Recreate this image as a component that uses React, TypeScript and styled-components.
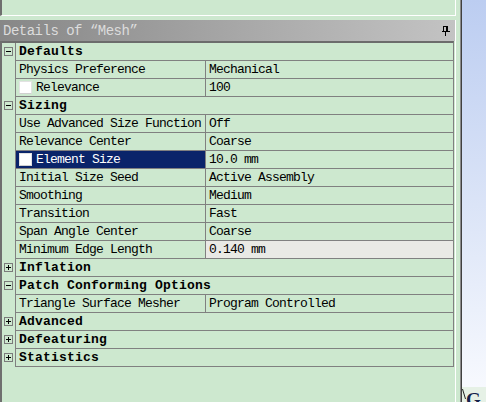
import React from "react";
import styled, { createGlobalStyle } from "styled-components";

const GREEN = "#cde8cf";
const GRID = "#808080";

const Global = createGlobalStyle`
  html, body { margin: 0; padding: 0; background: ${GREEN}; }
  body { font-family: "Liberation Mono", "DejaVu Sans Mono", monospace; }
`;

const Screen = styled.div`
  display: flex;
  width: 486px;
  height: 402px;
  overflow: hidden;
  background: ${GREEN};
`;

const Column = styled.div`
  display: flex;
  flex-direction: column;
  width: 456px;
  flex: none;
`;

const UpperPane = styled.div`
  height: 15px;
  box-sizing: content-box;
  border-left: 2px solid #6f6f6f;
  border-right: 1px solid #ffffff;
  border-bottom: 1px solid #ffffff;
  background: ${GREEN};
  flex: none;
`;

const Gap = styled.div`
  height: 4px;
  flex: none;
`;

const TitleBar = styled.div`
  height: 21px;
  flex: none;
  display: flex;
  align-items: center;
  justify-content: space-between;
  padding: 0 5px 0 3px;
  background: linear-gradient(to right, #878787, #a9a9a9 55%, #c3c3c3);
  border-right: 1px solid #ffffff;
  color: #dcdcdc;
  font-size: 14px;
  letter-spacing: -0.5px;
  white-space: pre;
`;

const Body = styled.div`
  flex: 1;
  border-left: 2px solid #6f6f6f;
  border-right: 1px solid #ffffff;
  padding-right: 1px;
  background: ${GREEN};
`;

const Table = styled.div`
  border-top: 2px solid #6c6c6c;
  border-right: 1px solid ${GRID};
  display: flex;
  flex-direction: column;
`;

const Row = styled.div`
  display: flex;
  height: 18px;
`;

const TreeCell = styled.div`
  width: 13px;
  flex: none;
  border-right: 1px solid ${GRID};
  display: flex;
  align-items: center;
  justify-content: center;
  padding-bottom: 1px;
  box-sizing: content-box;
  height: 17px;
`;

const Toggle = styled.div`
  position: relative;
  width: 7px;
  height: 7px;
  border: 1px solid #7a7a7a;
  &::before {
    content: "";
    position: absolute;
    left: 1px;
    top: 3px;
    width: 5px;
    height: 1px;
    background: #000;
  }
  &[data-open="false"]::after {
    content: "";
    position: absolute;
    left: 3px;
    top: 1px;
    width: 1px;
    height: 5px;
    background: #000;
  }
`;

const Cell = styled.div`
  box-sizing: border-box;
  height: 18px;
  border-bottom: 1px solid ${GRID};
  display: flex;
  align-items: center;
  font-size: 13px;
  letter-spacing: -0.8px;
  color: #000;
  white-space: pre;
  overflow: hidden;
`;

const GroupCell = styled(Cell)`
  flex: 1;
  padding-left: 3px;
  font-weight: bold;
  letter-spacing: 0.2px;
`;

const LabelCell = styled(Cell)<{ $selected?: boolean }>`
  width: 190px;
  flex: none;
  padding-left: 3px;
  border-right: 1px solid ${GRID};
  background: ${(p) => (p.$selected ? "#0a246a" : "transparent")};
  color: ${(p) => (p.$selected ? "#ffffff" : "#000")};
`;

const ValueCell = styled(Cell)<{ $shaded?: boolean }>`
  flex: 1;
  padding-left: 3px;
  background: ${(p) => (p.$shaded ? "#e9e9e5" : "transparent")};
`;

const Check = styled.span`
  width: 11px;
  height: 11px;
  background: #ffffff;
  border: 1px solid #e2e2e2;
  border-bottom-color: #d0d0d0;
  margin-right: 4px;
  flex: none;
`;

const Splitter = styled.div`
  width: 4px;
  flex: none;
`;

const Edge = styled.div`
  width: 1px;
  flex: none;
  background: #8a8a8a;
  border-right: 1px solid #404040;
`;

const Viewport = styled.div`
  flex: 1;
  display: flex;
  flex-direction: column;
`;

const ViewportCanvas = styled.div`
  flex: 1;
  background: linear-gradient(to bottom, #bccdf1, #dfe7f8 60%, #f7f9fe);
`;

const Legend = styled.div`
  height: 15px;
  flex: none;
  display: flex;
  align-items: flex-start;
  background: #e6f1e6;
  overflow: hidden;
`;

const LegendMark = styled.svg`
  width: 4px;
  height: 15px;
  flex: none;
`;

const LegendText = styled.span`
  font-family: "Liberation Serif", serif;
  font-weight: bold;
  font-size: 19px;
  line-height: 19px;
  margin-top: 3px;
  color: #15224a;
`;

type Item =
  | { kind: "group"; label: string; open: boolean }
  | {
      kind: "prop";
      label: string;
      value: string;
      check?: boolean;
      selected?: boolean;
      shaded?: boolean;
    };

const items: Item[] = [
  { kind: "group", label: "Defaults", open: true },
  { kind: "prop", label: "Physics Preference", value: "Mechanical" },
  { kind: "prop", label: "Relevance", value: "100", check: true },
  { kind: "group", label: "Sizing", open: true },
  { kind: "prop", label: "Use Advanced Size Function", value: "Off" },
  { kind: "prop", label: "Relevance Center", value: "Coarse" },
  { kind: "prop", label: "Element Size", value: "10.0 mm", check: true, selected: true },
  { kind: "prop", label: "Initial Size Seed", value: "Active Assembly" },
  { kind: "prop", label: "Smoothing", value: "Medium" },
  { kind: "prop", label: "Transition", value: "Fast" },
  { kind: "prop", label: "Span Angle Center", value: "Coarse" },
  { kind: "prop", label: "Minimum Edge Length", value: "0.140 mm", shaded: true },
  { kind: "group", label: "Inflation", open: false },
  { kind: "group", label: "Patch Conforming Options", open: true },
  { kind: "prop", label: "Triangle Surface Mesher", value: "Program Controlled" },
  { kind: "group", label: "Advanced", open: false },
  { kind: "group", label: "Defeaturing", open: false },
  { kind: "group", label: "Statistics", open: false },
];

const PinIcon = () => (
  <svg width="8" height="10" viewBox="0 0 8 10">
    <rect x="1.5" y="0.5" width="4" height="5" fill="none" stroke="#000" />
    <rect x="4" y="1" width="2" height="4" fill="#000" />
    <rect x="0" y="5" width="8" height="1" fill="#000" />
    <rect x="3" y="6" width="1" height="4" fill="#000" />
  </svg>
);

export default function App() {
  return (
    <>
      <Global />
      <Screen>
        <Column>
          <UpperPane />
          <Gap />
          <TitleBar>
            <span>Details of “Mesh”</span>
            <PinIcon />
          </TitleBar>
          <Body>
            <Table>
              {items.map((it) =>
                it.kind === "group" ? (
                  <Row key={it.label}>
                    <TreeCell>
                      <Toggle data-open={String(it.open)} />
                    </TreeCell>
                    <GroupCell>{it.label}</GroupCell>
                  </Row>
                ) : (
                  <Row key={it.label}>
                    <TreeCell />
                    <LabelCell $selected={it.selected}>
                      {it.check && <Check />}
                      {it.label}
                    </LabelCell>
                    <ValueCell $shaded={it.shaded}>{it.value}</ValueCell>
                  </Row>
                )
              )}
            </Table>
          </Body>
        </Column>
        <Splitter />
        <Edge />
        <Viewport>
          <ViewportCanvas />
          <Legend>
            <LegendMark viewBox="0 0 4 15">
              <path d="M0.5 2 L3.5 12" stroke="#222" strokeWidth="1" />
            </LegendMark>
            <LegendText>G</LegendText>
          </Legend>
        </Viewport>
      </Screen>
    </>
  );
}
